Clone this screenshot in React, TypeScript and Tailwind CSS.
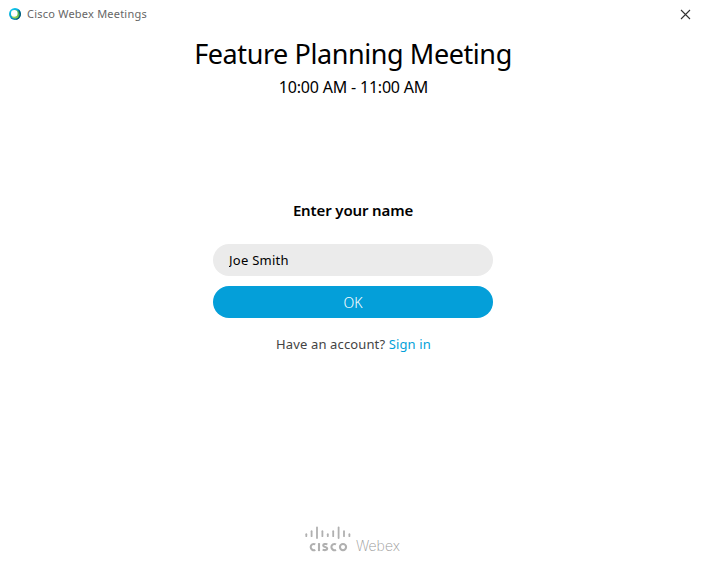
function WebexIcon() {
  return (
    <svg className="h-3 w-3 shrink-0" viewBox="0 0 12 12">
      <defs>
        <linearGradient id="ring" x1="0.1" y1="0" x2="0.7" y2="1">
          <stop offset="0" stopColor="#0fd0f2" />
          <stop offset="0.6" stopColor="#089fd0" />
          <stop offset="1" stopColor="#0a6f9a" />
        </linearGradient>
        <linearGradient id="leaf" x1="0.3" y1="1" x2="1" y2="0.3">
          <stop offset="0" stopColor="#a5dc50" />
          <stop offset="1" stopColor="#46ab50" />
        </linearGradient>
      </defs>
      <circle cx="6" cy="6" r="6" fill="url(#ring)" />
      <path d="M9.500 1.200A6 6 0 0 1 7 11.900L8 9.500l1.500-4z" fill="#075878" />
      <circle cx="6.300" cy="6.300" r="4.200" fill="url(#leaf)" />
      <circle cx="5.300" cy="5.400" r="3.300" fill="#fff" />
    </svg>
  );
}

const bars = [
  { x: 1.3, top: 8.2, bottom: 10.2 },
  { x: 6.6, top: 5.2, bottom: 10.2 },
  { x: 12, top: 1.4, bottom: 12 },
  { x: 17.4, top: 5.2, bottom: 10.2 },
  { x: 22.8, top: 8.2, bottom: 10.2 },
  { x: 28.2, top: 5.2, bottom: 10.2 },
  { x: 33.6, top: 1.4, bottom: 12 },
  { x: 39, top: 5.2, bottom: 10.2 },
  { x: 44.4, top: 8.2, bottom: 10.2 },
];

function CiscoLogo() {
  return (
    <svg className="h-[26px] w-[46px]" viewBox="0 0 46 26" fill="none" stroke="#b0b0b0">
      {bars.map((bar) => (
        <path key={bar.x} d={`M${bar.x} ${bar.top}V${bar.bottom}`} strokeWidth="1.800" strokeLinecap="round" />
      ))}
      <g strokeWidth="2.100">
        <path d="M10.300 18.400a3.100 3.100 0 1 0 0 5.400" />
        <path d="M14 17.100v8" />
        <path d="M22.400 18.200c-2-.5-4.200-.3-4.200 1.200 0 2 4 1 4 3.200 0 1.700-2.400 1.700-4.600 1.200" />
        <path d="M31 18.400a3.100 3.100 0 1 0 0 5.400" />
        <circle cx="38" cy="21.100" r="3.100" />
      </g>
    </svg>
  );
}

export default function App() {
  return (
    <div className="flex h-[580px] w-[706px] flex-col bg-white font-['Noto_Sans',sans-serif] text-black">
      <header className="flex h-7 items-center pr-[15px] pl-[9px]">
        <WebexIcon />
        <span className="ml-1.5 text-[11px] leading-4 tracking-[0.22px] whitespace-nowrap text-[#666]">
          Cisco Webex Meetings
        </span>
        <button aria-label="Close" className="ml-auto">
          <svg className="h-[11px] w-[11px]" viewBox="0 0 11 11" stroke="#333" strokeWidth="1.100">
            <path d="M1 1l9 9M10 1l-9 9" />
          </svg>
        </button>
      </header>
      <main className="flex flex-1 flex-col items-center">
        <h1 className="mt-1.5 text-[27px] leading-10 tracking-[-0.42px] whitespace-nowrap">Feature Planning Meeting</h1>
        <p className="mt-px pl-px text-[16px] leading-6 tracking-[-0.2px] whitespace-nowrap">10:00 AM - 11:00 AM</p>
        <h2 className="mt-[99px] text-[15px] leading-6 font-semibold tracking-[-0.13px] whitespace-nowrap">
          Enter your name
        </h2>
        <input
          defaultValue="Joe Smith"
          aria-label="Your name"
          className="mt-[22px] h-8 w-[280px] rounded-full bg-[#ebebeb] px-4 text-[13px] tracking-[0.25px] outline-none"
        />
        <button className="mt-2.5 h-8 w-[280px] rounded-full bg-[#049fd9] text-[14px] font-light text-white">
          OK
        </button>
        <p className="mt-4 pl-px text-[13px] leading-5 tracking-[0.13px] whitespace-nowrap text-[#444]">
          Have an account? <a className="text-[#049fd9]">Sign in</a>
        </p>
      </main>
      <footer className="flex h-[54px] items-start justify-center gap-[5px]">
        <CiscoLogo />
        <span className="mt-2.5 w-[45px] font-['Inter',sans-serif] text-[14px] leading-[19px] font-extralight whitespace-nowrap text-[#999]">
          Webex
        </span>
      </footer>
    </div>
  );
}
